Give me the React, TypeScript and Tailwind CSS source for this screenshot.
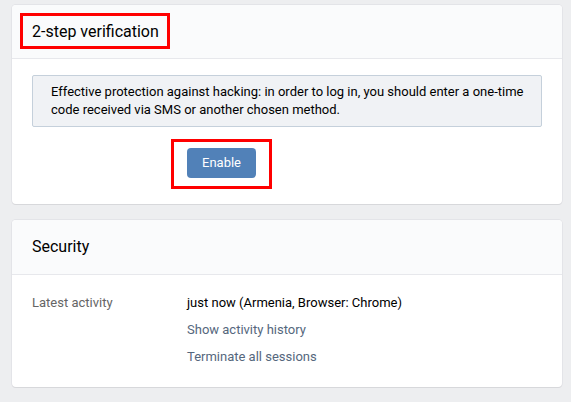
import React from "react";

const font = { fontFamily: 'Roboto, "Liberation Sans", sans-serif' };

const App: React.FC = () => {
  return (
    <div
      className="min-h-screen bg-[#edeef0] pt-[5px] pl-[12px]"
      style={font}
    >
      {/* 2-step verification */}
      <div className="w-[550px] rounded-[4px] bg-white shadow-[0_1px_0_0_#d7d8db,0_0_0_1px_#e3e4e8]">
        <div className="relative flex h-[54px] items-center rounded-t-[4px] border-b border-[#e7e8ec] bg-[#fafbfc] px-5 text-[16px] text-black">
          2-step verification
          <div className="absolute left-[8px] top-[8px] h-[36px] w-[150px] border-[3px] border-[#f00]" />
        </div>
        <div className="px-5 pt-4 pb-[26px]">
          <div className="rounded-[2px] border border-[#c5d0db] bg-[#f0f2f5] py-[7px] pl-[18px] pr-[6px] text-[13px] leading-[18px] text-black">
            Effective protection against hacking: in order to log in, you
            should enter a one-time code received via SMS or another chosen
            method.
          </div>
          <div className="relative ml-[155px] mt-[21px] w-fit">
            <button className="h-[30px] w-[69px] rounded-[4px] bg-[#5181b8] text-[13px] text-white">
              Enable
            </button>
            <div className="absolute left-[-16px] top-[-9px] h-[50px] w-[101px] border-[3px] border-[#f00]" />
          </div>
        </div>
      </div>

      {/* Security */}
      <div className="mt-[16px] w-[550px] rounded-[4px] bg-white shadow-[0_1px_0_0_#d7d8db,0_0_0_1px_#e3e4e8]">
        <div className="flex h-[55px] items-center rounded-t-[4px] border-b border-[#e7e8ec] bg-[#fafbfc] px-5 text-[16px] text-black">
          Security
        </div>
        <div className="flex px-5 pt-[19px] pb-[21px] text-[13px]">
          <div className="w-[155px] leading-[18px] text-[#656565]">
            Latest activity
          </div>
          <div className="flex flex-col gap-[9px] leading-[18px]">
            <div className="text-black">
              just now (Armenia, Browser: Chrome)
            </div>
            <div className="text-[#55677d]">Show activity history</div>
            <div className="text-[#55677d]">Terminate all sessions</div>
          </div>
        </div>
      </div>
    </div>
  );
};

export default App;
